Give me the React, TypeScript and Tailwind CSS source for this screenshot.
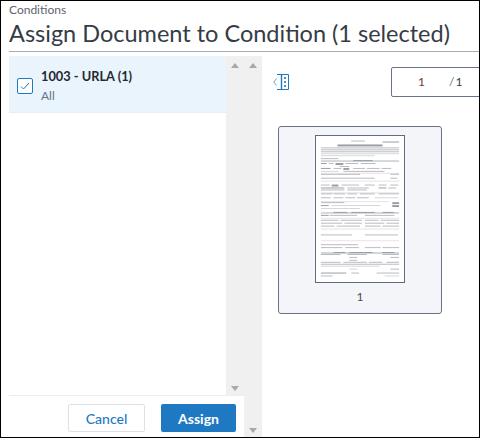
// thumbnail of the scanned form: [x, y, width, height, colour]
const dark = "#9a9da6"
const mid = "#b7bac1"
const soft = "#d5d6dc"
const pink = "#eadfe4"

const docRows: [number, number, number, number, string][] = [
  [36, 4, 14, 1, mid], [68, 5, 17, 1, dark], [22, 8, 46, 2, dark],
  [5, 11, 80, 1, mid], [5, 13, 80, 1, mid], [5, 15, 80, 1, mid], [5, 17, 80, 1, soft], [5, 19, 55, 1, soft],
  [5, 22, 18, 1, mid], [5, 24, 80, 2, soft], [38, 24, 20, 1, dark],
  [5, 27, 6, 1, dark], [13, 27, 5, 1, mid], [20, 27, 8, 2, dark], [30, 27, 13, 1, mid], [46, 27, 15, 1, mid],
  [24, 30, 10, 1, mid], [5, 32, 10, 1, dark], [18, 32, 8, 1, mid], [28, 32, 6, 2, dark], [38, 32, 12, 1, mid], [52, 32, 13, 1, mid], [67, 32, 10, 1, mid],
  [5, 35, 18, 1, soft], [28, 35, 42, 1, mid],
  [5, 37, 80, 1, pink], [5, 38, 40, 1, mid], [76, 38, 9, 1, mid], [5, 42, 55, 1, mid], [76, 42, 7, 1, mid], [5, 45, 80, 1, pink],
  [5, 49, 9, 1, mid], [16, 49, 7, 2, dark], [26, 49, 18, 1, mid], [50, 49, 10, 1, mid], [64, 49, 8, 1, mid], [76, 49, 8, 1, mid],
  [5, 52, 24, 1, dark], [32, 52, 22, 1, mid], [64, 52, 8, 1, dark], [74, 52, 8, 1, mid],
  [5, 54, 24, 1, mid], [32, 54, 20, 1, mid], [5, 57, 80, 1, pink],
  [5, 58, 12, 1, mid], [18, 58, 12, 1, mid], [32, 58, 10, 1, mid], [45, 58, 15, 1, mid], [64, 58, 21, 1, mid],
  [5, 62, 10, 1, mid], [18, 62, 10, 1, mid], [30, 62, 10, 1, mid], [42, 62, 12, 1, mid], [60, 62, 24, 1, soft],
  [5, 66, 70, 1, pink], [5, 67, 24, 1, mid], [78, 67, 7, 2, dark], [5, 70, 8, 1, dark], [16, 70, 50, 1, soft], [78, 70, 7, 2, dark], [5, 73, 40, 1, soft],
  [5, 77, 80, 2, soft], [18, 77, 14, 1, dark], [36, 77, 24, 1, dark], [68, 77, 12, 1, dark],
  [5, 80, 8, 1, dark], [14, 80, 28, 1, mid], [50, 80, 30, 1, mid], [5, 83, 80, 1, pink],
  [5, 85, 18, 1, mid], [25, 85, 22, 1, mid], [50, 85, 14, 1, mid], [66, 85, 19, 1, mid],
  [5, 88, 22, 1, mid], [29, 88, 18, 1, mid], [50, 88, 20, 1, mid], [72, 88, 13, 1, mid],
  [5, 91, 14, 1, mid], [21, 91, 24, 1, mid], [50, 91, 16, 1, mid], [68, 91, 17, 1, mid],
  [5, 94, 80, 1, pink], [5, 100, 32, 1, mid], [50, 100, 34, 1, mid], [5, 106, 80, 1, pink],
  [5, 110, 38, 1, mid], [5, 113, 22, 1, mid], [30, 113, 14, 1, mid], [50, 113, 16, 1, mid], [68, 113, 17, 1, mid],
  [5, 118, 80, 2, soft], [18, 118, 12, 1, dark], [34, 118, 24, 1, dark], [68, 118, 12, 1, dark],
  [5, 120, 20, 1, mid], [32, 120, 20, 1, mid], [68, 120, 17, 1, mid], [34, 123, 8, 1, mid], [76, 123, 9, 1, mid], [34, 126, 8, 1, mid],
  [5, 128, 20, 1, mid], [28, 128, 24, 1, mid], [54, 128, 14, 1, mid], [72, 128, 13, 1, mid],
  [5, 130, 80, 1, mid], [5, 132, 60, 1, soft], [34, 135, 8, 1, soft], [76, 135, 9, 1, mid],
  [5, 139, 26, 1, dark], [36, 139, 8, 1, mid], [62, 139, 23, 1, mid], [5, 142, 12, 1, mid], [70, 142, 15, 1, soft],
]

function Scrollbar() {
  return (
    <div className="flex w-[18px] shrink-0 flex-col items-center justify-between bg-[#f0f0f0] pt-[7px] pb-[4px]">
      <div className="h-0 w-0 border-x-[4px] border-b-[5px] border-x-transparent border-b-[#a9a9a9]" />
      <div className="h-0 w-0 border-x-[4px] border-t-[5px] border-x-transparent border-t-[#a9a9a9]" />
    </div>
  )
}

export default function App() {
  return (
    <div className="flex h-[438px] w-[480px] flex-col overflow-hidden border border-black bg-white font-['Lato',sans-serif] text-[#353c46]">
      <div className="ml-2 mt-[2px] border-b border-[#a9abae] pb-[1px]">
        <div className="text-[12px] leading-[14px] text-[#5c6470]">Conditions</div>
        <h1 className="text-[23.5px] font-normal leading-[33px] whitespace-nowrap">Assign Document to Condition (1 selected)</h1>
      </div>

      <div className="flex min-h-0 flex-1 pl-2 pt-[4px]">
        <div className="flex w-[235px] shrink-0 flex-col">
          <div className="flex min-h-0 flex-1">
            <div className="w-[217px]">
              <div className="flex h-[57px] items-center gap-[8px] border-b border-[#ebedf0] bg-[#e9f4fd] pl-[8px] pt-[3px]">
                <div className="flex h-[16px] w-[16px] items-center justify-center rounded-[2px] border-[1.5px] border-[#1e79c2] bg-white">
                  <svg width="10" height="8" viewBox="0 0 10 8" fill="none" stroke="#1e79c2" strokeWidth="1">
                    <path d="M1 4.5 L3.5 7 L9 1" />
                  </svg>
                </div>
                <div className="-mt-[1px]">
                  <div className="text-[12.8px] font-bold leading-[18px] text-[#25292f]">1003 - URLA (1)</div>
                  <div className="mt-[3px] text-[12px] leading-[16px] text-[#697489]">All</div>
                </div>
              </div>
            </div>
            <Scrollbar />
          </div>
          <div className="flex h-[42px] shrink-0 justify-end gap-[16px] border-t border-[#ebedf0] pr-[8px] pt-[8px]">
            <button className="h-[28px] w-[77px] rounded-[2px] border border-[#dfe1e6] bg-white text-[14px] font-medium text-[#1e79c2]">Cancel</button>
            <button className="h-[28px] w-[75px] rounded-[2px] bg-[#1e79c2] text-[14px] font-bold text-white">Assign</button>
          </div>
        </div>

        <Scrollbar />

        <div className="min-w-0 flex-1 pl-[10px]">
          <div className="flex items-start justify-between pt-[11px]">
            <svg className="mt-[7px] ml-[1px]" width="16" height="16" viewBox="0 0 16 16" fill="none" stroke="#1e79c2" strokeWidth="1">
              <path d="M3.5 4.5 L0.8 8 L3.5 11.5" strokeOpacity="0.7" />
              <path d="M4 0.5 H15.5 V15.5 H4" strokeWidth="1" />
              <path d="M8.5 0.5 V15.5" strokeWidth="1.4" />
              <path d="M12 3 V5 M12 7 V9 M12 11 V13" strokeWidth="1.6" />
            </svg>
            <div className="-mr-[20px] flex h-[30px] w-[108px] items-center rounded-[2px] border border-[#697489] text-[12px]">
              <span className="ml-[26px] text-[#7c2f2f]">1</span>
              <span className="ml-[24px] text-[#697489]">/</span>
              <span className="ml-[1px]">1</span>
            </div>
          </div>
          <div className="ml-[6px] mt-[29px] flex h-[188px] w-[164px] flex-col items-center rounded-[3px] border border-[#697489] bg-[#f4f5f8] pt-[8px]">
            <div className="h-[148px] w-[90px] shrink-0 overflow-hidden border border-[#5f6b80] bg-white">
              <svg className="blur-[0.4px]" width="88" height="146" viewBox="0 0 90 148">
                {docRows.map(([x, y, w, h, fill], i) => (
                  <rect key={i} x={x} y={y} width={w} height={h} fill={fill} />
                ))}
              </svg>
            </div>
            <div className="mt-[6px] text-[12px] leading-[16px] text-[#464e5a]">1</div>
          </div>
        </div>
      </div>
    </div>
  )
}
